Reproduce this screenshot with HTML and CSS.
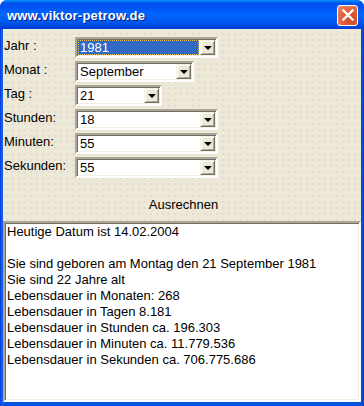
FILE: index.html
```html
<!DOCTYPE html>
<html>
<head>
<meta charset="utf-8">
<link rel="stylesheet" href="styles.css">
</head>
<body>
<div class="window">
  <div class="titlebar">
    <span class="title">www.viktor-petrow.de</span>
    <span class="close"><svg width="12" height="12" viewBox="0 0 12 12"><path d="M1.5 1.5 L10.5 10.5 M10.5 1.5 L1.5 10.5" stroke="#fff" stroke-width="2.4" stroke-linecap="square"/></svg></span>
  </div>
  <div class="client">
    <div class="form">
      <div class="row"><span class="label">Jahr :</span><div class="combo w143"><span class="value selected">1981</span><span class="drop"><i></i></span></div></div>
      <div class="row"><span class="label">Monat :</span><div class="combo w119"><span class="value">September</span><span class="drop"><i></i></span></div></div>
      <div class="row"><span class="label">Tag :</span><div class="combo w87"><span class="value">21</span><span class="drop"><i></i></span></div></div>
      <div class="row"><span class="label">Stunden:</span><div class="combo w143"><span class="value">18</span><span class="drop"><i></i></span></div></div>
      <div class="row"><span class="label">Minuten:</span><div class="combo w143"><span class="value">55</span><span class="drop"><i></i></span></div></div>
      <div class="row"><span class="label">Sekunden:</span><div class="combo w143"><span class="value">55</span><span class="drop"><i></i></span></div></div>
    </div>
    <div class="action"><span class="btn">Ausrechnen</span></div>
    <div class="output">
      <div>Heutige Datum ist 14.02.2004</div>
      <div>&nbsp;</div>
      <div>Sie sind geboren am Montag den 21 September 1981</div>
      <div>Sie sind 22 Jahre alt</div>
      <div>Lebensdauer in Monaten: 268</div>
      <div>Lebensdauer in Tagen 8.181</div>
      <div>Lebensdauer in Stunden ca. 196.303</div>
      <div>Lebensdauer in Minuten ca. 11.779.536</div>
      <div>Lebensdauer in Sekunden ca. 706.775.686</div>
    </div>
  </div>
</div>
</body>
</html>
```

FILE: styles.css
```css
html, body {
  margin: 0;
  padding: 0;
  background: #ffffff;
}
body {
  font-family: "Liberation Sans", Arial, sans-serif;
  font-size: 13px;
  color: #000;
}
.window {
  width: 364px;
  height: 406px;
  display: flex;
  flex-direction: column;
  background: linear-gradient(to right, #0831d9 0px, #166aee 2px, #0855dd 3px, #0855dd 361px, #0a3cc8 364px);
  border-radius: 7px 7px 0 0;
  box-sizing: border-box;
  overflow: hidden;
}
.titlebar {
  height: 29px;
  flex: none;
  display: flex;
  align-items: center;
  justify-content: space-between;
  padding: 0 6px 0 7px;
  background: linear-gradient(to bottom, #0997ff 0px, #0053ee 3px, #0050ee 6px, #0066ff 14px, #0058f0 22px, #0044d8 27px, #003dd7 29px);
}
.title {
  color: #fff;
  font-weight: bold;
  font-size: 13px;
  letter-spacing: 0.2px;
  text-shadow: 1px 1px 0 #0a1e80;
  padding-top: 1px;
}
.close {
  width: 19px;
  height: 19px;
  border: 1px solid #fff;
  border-radius: 3px;
  display: flex;
  align-items: center;
  justify-content: center;
  background: radial-gradient(circle at 70% 70%, #cc4620 0%, #e2603a 50%, #f08d6e 100%);
  margin-top: 1px;
}
.client {
  flex: 1;
  margin: 0 3px 4px 3px;
  background-color: #ece9d8;
  background-image: radial-gradient(circle, rgba(236, 180, 180, 0.45) 0.6px, transparent 1px);
  background-size: 6px 6px;
  background-position: 1px 2px;
  display: flex;
  flex-direction: column;
}
.form {
  display: flex;
  flex-direction: column;
  gap: 3px;
  padding-top: 8px;
}
.row {
  display: flex;
  align-items: center;
  height: 21px;
}
.label {
  width: 71px;
  padding-left: 1px;
  flex: none;
  position: relative;
  top: -2px;
}
.combo {
  height: 21px;
  box-sizing: border-box;
  border-style: solid;
  border-width: 2px;
  border-color: #a9a699 #ffffff #ffffff #a9a699;
  box-shadow: inset 1px 1px 0 #716f64, inset -1px -1px 0 #f1efe2;
  background: #fff;
  display: flex;
  align-items: stretch;
  padding: 1px;
}
.w143 { width: 143px; }
.w119 { width: 119px; }
.w87 { width: 87px; }
.value {
  flex: 1;
  padding-left: 2px;
  display: flex;
  align-items: center;
  margin-right: 1px;
}
.value.selected {
  background: #316ac5;
  color: #fff;
  outline: 1px dotted #e8c050;
  outline-offset: -1px;
}
.drop {
  width: 15px;
  flex: none;
  box-sizing: border-box;
  background: #ece9d8;
  border-style: solid;
  border-width: 1px;
  border-color: #f1efe2 #716f64 #716f64 #f1efe2;
  box-shadow: inset 1px 1px 0 #ffffff, inset -1px -1px 0 #aca899;
  display: flex;
  align-items: center;
  justify-content: center;
}
.drop i {
  width: 0;
  height: 0;
  border-left: 4px solid transparent;
  border-right: 4px solid transparent;
  border-top: 4px solid #000;
  margin-top: 1px;
}
.action {
  display: flex;
  justify-content: center;
  padding-left: 3px;
  height: 28px;
  margin-top: 12px;
  margin-bottom: 3px;
  align-items: center;
}
.btn {
  padding: 0 8px;
}
.output {
  flex: 1;
  box-sizing: border-box;
  background: #fff;
  border-style: solid;
  border-width: 2px;
  border-color: #aca899 #ffffff #ffffff #aca899;
  box-shadow: inset 1px 1px 0 #716f64, inset -1px -1px 0 #f1efe2;
  padding: 1px 2px;
  line-height: 16px;
}
```
